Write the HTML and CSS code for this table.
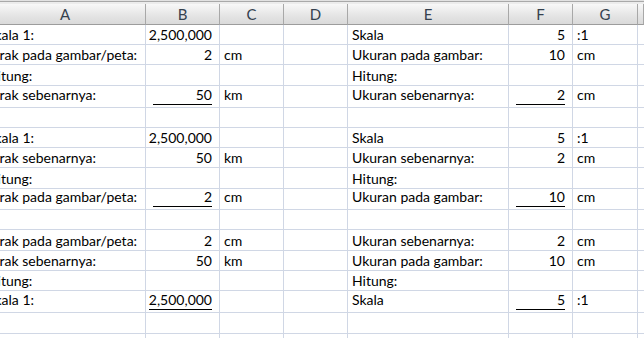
FILE: index.html
```html
<!DOCTYPE html>
<html>
<head>
<meta charset="utf-8">
<link rel="stylesheet" href="styles.css">
</head>
<body>
<div class="sheet">
  <div class="topbar"></div>
  <div class="row head">
    <div class="c">A</div><div class="c">B</div><div class="c">C</div><div class="c">D</div><div class="c">E</div><div class="c">F</div><div class="c">G</div><div class="c"></div>
  </div>

  <div class="row h20">
    <div class="c">Skala 1:</div><div class="c num"><span>2,500,000</span></div><div class="c"></div><div class="c"></div><div class="c">Skala</div><div class="c num"><span>5</span></div><div class="c">:1</div><div class="c"></div>
  </div>
  <div class="row h20">
    <div class="c">Jarak pada gambar/peta:</div><div class="c num"><span>2</span></div><div class="c">cm</div><div class="c"></div><div class="c">Ukuran pada gambar:</div><div class="c num"><span>10</span></div><div class="c">cm</div><div class="c"></div>
  </div>
  <div class="row h21">
    <div class="c">Hitung:</div><div class="c num"></div><div class="c"></div><div class="c"></div><div class="c">Hitung:</div><div class="c num"></div><div class="c"></div><div class="c"></div>
  </div>
  <div class="row h22 urow">
    <div class="c">Jarak sebenarnya:</div><div class="c num"><span class="ul">50</span></div><div class="c">km</div><div class="c"></div><div class="c">Ukuran sebenarnya:</div><div class="c num"><span class="ul">2</span></div><div class="c">cm</div><div class="c"></div>
  </div>
  <div class="row h20">
    <div class="c"></div><div class="c"></div><div class="c"></div><div class="c"></div><div class="c"></div><div class="c"></div><div class="c"></div><div class="c"></div>
  </div>

  <div class="row h20">
    <div class="c">Skala 1:</div><div class="c num"><span>2,500,000</span></div><div class="c"></div><div class="c"></div><div class="c">Skala</div><div class="c num"><span>5</span></div><div class="c">:1</div><div class="c"></div>
  </div>
  <div class="row h20">
    <div class="c">Jarak sebenarnya:</div><div class="c num"><span>50</span></div><div class="c">km</div><div class="c"></div><div class="c">Ukuran sebenarnya:</div><div class="c num"><span>2</span></div><div class="c">cm</div><div class="c"></div>
  </div>
  <div class="row h21">
    <div class="c">Hitung:</div><div class="c num"></div><div class="c"></div><div class="c"></div><div class="c">Hitung:</div><div class="c num"></div><div class="c"></div><div class="c"></div>
  </div>
  <div class="row h21 urow">
    <div class="c">Jarak pada gambar/peta:</div><div class="c num"><span class="ul">2</span></div><div class="c">cm</div><div class="c"></div><div class="c">Ukuran pada gambar:</div><div class="c num"><span class="ul">10</span></div><div class="c">cm</div><div class="c"></div>
  </div>
  <div class="row h20">
    <div class="c"></div><div class="c"></div><div class="c"></div><div class="c"></div><div class="c"></div><div class="c"></div><div class="c"></div><div class="c"></div>
  </div>

  <div class="row h21">
    <div class="c">Jarak pada gambar/peta:</div><div class="c num"><span>2</span></div><div class="c">cm</div><div class="c"></div><div class="c">Ukuran sebenarnya:</div><div class="c num"><span>2</span></div><div class="c">cm</div><div class="c"></div>
  </div>
  <div class="row h20">
    <div class="c">Jarak sebenarnya:</div><div class="c num"><span>50</span></div><div class="c">km</div><div class="c"></div><div class="c">Ukuran pada gambar:</div><div class="c num"><span>10</span></div><div class="c">cm</div><div class="c"></div>
  </div>
  <div class="row h20">
    <div class="c">Hitung:</div><div class="c num"></div><div class="c"></div><div class="c"></div><div class="c">Hitung:</div><div class="c num"></div><div class="c"></div><div class="c"></div>
  </div>
  <div class="row h22 urow">
    <div class="c">Skala 1:</div><div class="c num"><span class="ul">2,500,000</span></div><div class="c"></div><div class="c"></div><div class="c">Skala</div><div class="c num"><span class="ul">5</span></div><div class="c">:1</div><div class="c"></div>
  </div>
  <div class="row h21">
    <div class="c"></div><div class="c"></div><div class="c"></div><div class="c"></div><div class="c"></div><div class="c"></div><div class="c"></div><div class="c"></div>
  </div>
  <div class="row h20">
    <div class="c"></div><div class="c"></div><div class="c"></div><div class="c"></div><div class="c"></div><div class="c"></div><div class="c"></div><div class="c"></div>
  </div>
</div>
</body>
</html>
```

FILE: styles.css
```css
* { box-sizing: border-box; }
html, body { margin: 0; padding: 0; background: #fff; }
body {
  font-family: Lato, "Open Sans", sans-serif;
  font-size: 14px;
  color: #000;
}
.sheet {
  width: 644px;
  height: 338px;
  overflow: hidden;
}
.topbar {
  height: 4px;
  background: #ececec;
  border-top: 1px solid #e2e2e2;
  box-shadow: inset 0 1px 0 #a9a9a9;
}
.row {
  display: grid;
  grid-template-columns: 161px 74px 64px 64px 161px 64px 65px 1fr;
  margin-left: -15px;
  width: 659px;
}
.h20 { height: 20px; }
.h21 { height: 21px; }
.h22 { height: 22px; }
.c {
  border-right: 1px solid #d0d7e5;
  border-bottom: 1px solid #d0d7e5;
  display: flex;
  align-items: flex-end;
  padding: 0 3px 0 4px;
  white-space: nowrap;
  overflow: hidden;
  line-height: 18px;
}
.row > .c:first-child { padding-left: 2px; }
.urow .c { padding-bottom: 3px; }
.num {
  justify-content: flex-end;
  padding-left: 7px;
  padding-right: 7px;
}
.urow .num { padding-bottom: 2px; }
.num .ul {
  flex: 1;
  text-align: right;
  border-bottom: 1px solid #000;
}
.head {
  height: 21px;
}
.head .c {
  background: linear-gradient(#f8f8f8, #e4e4e4 60%, #dadada);
  border-right: 1px solid #a8a8a8;
  border-bottom: 1px solid #9c9c9c;
  justify-content: center;
  align-items: center;
  color: #35414e;
  font-size: 15px;
  line-height: 16px;
  padding: 0;
}
.head .c:first-child { padding: 0; }
```
